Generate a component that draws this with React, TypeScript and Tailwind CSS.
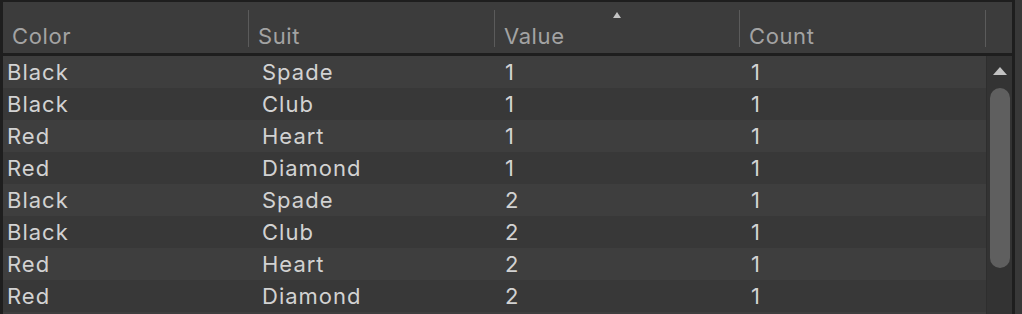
import React from 'react';

type Card = { color: string; suit: string; value: number; count: number };

const cards: Card[] = [
  { color: 'Black', suit: 'Spade', value: 1, count: 1 },
  { color: 'Black', suit: 'Club', value: 1, count: 1 },
  { color: 'Red', suit: 'Heart', value: 1, count: 1 },
  { color: 'Red', suit: 'Diamond', value: 1, count: 1 },
  { color: 'Black', suit: 'Spade', value: 2, count: 1 },
  { color: 'Black', suit: 'Club', value: 2, count: 1 },
  { color: 'Red', suit: 'Heart', value: 2, count: 1 },
  { color: 'Red', suit: 'Diamond', value: 2, count: 1 },
];

const font = { fontFamily: 'Inter, "Noto Sans", sans-serif' };

function HeaderCell({ label, sorted, first }: { label: string; sorted?: boolean; first?: boolean }) {
  return (
    <div className="relative flex h-full items-end">
      {!first && <div className="absolute left-0 top-[8px] h-[37px] w-px bg-[#5b5b5b]" />}
      {sorted && (
        <div className="absolute left-[119px] top-[10px] h-0 w-0 border-x-[4px] border-b-[6px] border-x-transparent border-b-[#c4c4c4]" />
      )}
      <span className={`${first ? 'pl-[9px]' : 'pl-[10px]'} pb-[4px] text-[22px] leading-[26px] tracking-[0.6px] text-[#a3a3a3]`}>
        {label}
      </span>
    </div>
  );
}

export default function App() {
  return (
    <div className="flex h-[314px] w-[1022px] overflow-hidden bg-[#383838]" style={font}>
      <div className="flex h-[340px] w-[1015px] shrink-0 flex-col border-l-[3px] border-r-[3px] border-t-2 border-[#1e1e1e]">
        {/* column headers */}
        <div className="grid h-[51px] shrink-0 grid-cols-[245px_246px_245px_246px_1fr] bg-[#3c3c3c]">
          <HeaderCell label="Color" first />
          <HeaderCell label="Suit" />
          <HeaderCell label="Value" sorted />
          <HeaderCell label="Count" />
          <HeaderCell label="" />
        </div>
        <div className="h-[3px] shrink-0 bg-[#1e1e1e]" />

        <div className="flex flex-1">
          {/* rows */}
          <div className="flex flex-1 flex-col">
            {cards.map((c, i) => (
              <div
                key={i}
                className={`grid h-[32px] shrink-0 grid-cols-[245px_246px_245px_1fr] items-center text-[22px] leading-[26px] tracking-[1px] text-[#d2d2d2] ${
                  i % 2 === 0 ? 'bg-[#3e3e3e]' : 'bg-[#383838]'
                }`}
              >
                <span className="pl-[4px]">{c.color}</span>
                <span className="pl-[14px]">{c.suit}</span>
                <span className="pl-[11px]">{c.value}</span>
                <span className="pl-[12px]">{c.count}</span>
              </div>
            ))}
            <div className="h-[32px] shrink-0 bg-[#3e3e3e]" />
          </div>

          {/* vertical scrollbar */}
          <div className="relative w-[26px] shrink-0 border-l border-[#2e2e2e] bg-[#333333]">
            <div className="absolute left-[6px] top-[11px] h-0 w-0 border-x-[7px] border-b-[8px] border-x-transparent border-b-[#c2c2c2]" />
            <div className="absolute left-[3px] top-[32px] h-[180px] w-[20px] rounded-full bg-[#5f5f5f]" />
          </div>
        </div>
      </div>
    </div>
  );
}
